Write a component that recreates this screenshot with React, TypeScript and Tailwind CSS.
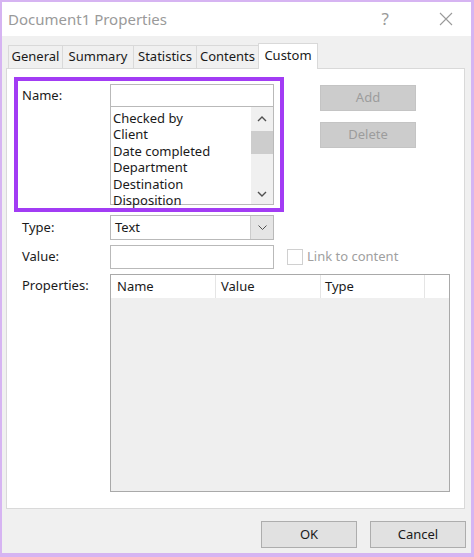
import React from "react";

const font = { fontFamily: '"Noto Sans", "Open Sans", sans-serif' };

const tabs = [
  { label: "General", w: "w-[54px]" },
  { label: "Summary", w: "w-[71px]" },
  { label: "Statistics", w: "w-[63px]" },
  { label: "Contents", w: "w-[62px]" },
];

const names = ["Checked by", "Client", "Date completed", "Department", "Destination", "Disposition"];

const Chevron = ({ up = false }: { up?: boolean }) => (
  <svg width="10" height="6" viewBox="0 0 10 6">
    <polyline
      points={up ? "1,5 5,1 9,5" : "1,1 5,5 9,1"}
      fill="none"
      stroke="#505050"
      strokeWidth="1.4"
    />
  </svg>
);

export default function App() {
  return (
    <div
      className="w-[474px] h-[557px] flex flex-col bg-[#f0f0f0] border-l-2 border-r-[3px] border-t-2 border-b-4 border-[#d6b4f2] text-[13px] text-[#1a1a1a] overflow-hidden"
      style={font}
    >
      {/* title bar */}
      <div className="h-[34px] shrink-0 bg-white flex items-center pl-[6px] pr-[18px]">
        <span className="text-[15px] text-[#9a9a9a] flex-1">Document1 Properties</span>
        <span className="text-[17px] text-[#9a9a9a] mr-[50px]">?</span>
        <svg width="14" height="14" viewBox="0 0 14 14">
          <path d="M1 1 L13 13 M13 1 L1 13" stroke="#9a9a9a" strokeWidth="1.1" />
        </svg>
      </div>

      {/* tabs */}
      <div className="pt-[7px] px-[4px] flex items-end">
        <div className="w-[2px]" />
        {tabs.map((t) => (
          <div
            key={t.label}
            className={`${t.w} h-[23px] border border-r-0 border-b-0 border-[#d9d9d9] bg-[#f0f0f0] flex items-center justify-center`}
          >
            {t.label}
          </div>
        ))}
        <div className="w-[60px] h-[26px] -mb-px relative z-10 border border-b-0 border-[#d9d9d9] bg-white flex items-start pt-[2px] justify-center">
          Custom
        </div>
      </div>

      {/* panel */}
      <div className="mx-[4px] w-[459px] h-[441px] bg-white border border-[#d9d9d9] flex flex-col">
        <div className="flex items-start">
          <div className="ml-[7px] mt-[8px] w-[270px] h-[135px] border-4 border-[#a23cf4] flex pt-[3px]">
            <div className="w-[92px] pl-[4px] pt-[2px]">Name:</div>
            <div className="flex flex-col">
              <div className="w-[164px] h-[23px] border border-[#b9b9b9] bg-white" />
              <div className="w-[164px] h-[98px] border border-t-0 border-[#b9b9b9] flex">
                <div className="flex-1 pl-[2px] leading-[16.4px] pt-[3px]">
                  {names.map((n) => (
                    <div key={n}>{n}</div>
                  ))}
                </div>
                <div className="w-[22px] bg-[#f0f0f0] flex flex-col items-center">
                  <div className="h-[24px] flex items-center">
                    <Chevron up />
                  </div>
                  <div className="w-[22px] h-[23px] bg-[#cdcdcd]" />
                  <div className="flex-1" />
                  <div className="h-[20px] flex items-center">
                    <Chevron />
                  </div>
                </div>
              </div>
            </div>
          </div>
          <div className="ml-[36px] mt-[16px] flex flex-col gap-[11px]">
            <div className="w-[96px] h-[26px] bg-[#cccccc] border border-[#c4c4c4] text-[#9c9c9c] flex items-center justify-center">
              Add
            </div>
            <div className="w-[96px] h-[26px] bg-[#cccccc] border border-[#c4c4c4] text-[#9c9c9c] flex items-center justify-center">
              Delete
            </div>
          </div>
        </div>

        <div className="flex items-center mt-[3px] pl-[15px]">
          <div className="w-[88px]">Type:</div>
          <div className="w-[164px] h-[25px] border border-[#b9b9b9] flex items-center">
            <div className="flex-1 pl-[4px]">Text</div>
            <div className="w-[23px] h-[23px] bg-[#e5e5e5] border-l border-[#cccccc] flex items-center justify-center">
              <svg width="9" height="5" viewBox="0 0 9 5">
                <polyline points="0.5,0.5 4.5,4.5 8.5,0.5" fill="none" stroke="#505050" strokeWidth="1" />
              </svg>
            </div>
          </div>
        </div>

        <div className="flex items-center mt-[5px] pl-[15px]">
          <div className="w-[88px]">Value:</div>
          <div className="w-[164px] h-[24px] border border-[#b9b9b9]" />
          <div className="ml-[13px] w-[16px] h-[16px] border border-[#d0d0d0]" />
          <div className="ml-[4px] text-[#a0a0a0]">Link to content</div>
        </div>

        <div className="flex items-start mt-[5px] pl-[15px]">
          <div className="w-[88px] pt-[2px]">Properties:</div>
          <div className="w-[340px] h-[218px] border border-[#a9a9a9] flex flex-col bg-[#efefef]">
            <div className="h-[23px] bg-white flex items-center">
              <div className="w-[105px] h-full border-r border-[#e5e5e5] pl-[6px] flex items-center">Name</div>
              <div className="w-[105px] h-full border-r border-[#e5e5e5] pl-[5px] flex items-center">Value</div>
              <div className="w-[104px] h-full border-r border-[#e5e5e5] pl-[4px] flex items-center">Type</div>
            </div>
          </div>
        </div>
      </div>

      {/* footer */}
      <div className="flex justify-end gap-[13px] pr-[5px] mt-[12px]">
        <div className="w-[96px] h-[27px] bg-[#e1e1e1] border border-[#adadad] flex items-center justify-center">
          OK
        </div>
        <div className="w-[96px] h-[27px] bg-[#e1e1e1] border border-[#adadad] flex items-center justify-center">
          Cancel
        </div>
      </div>
    </div>
  );
}
